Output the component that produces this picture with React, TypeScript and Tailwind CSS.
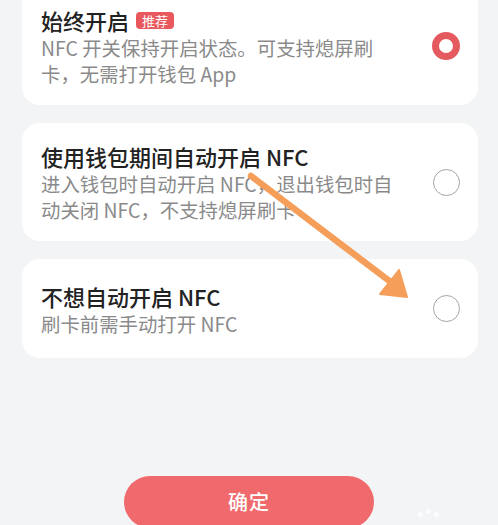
import React from "react"

type Option = {
    title: string
    desc: string
    badge?: string
    selected?: boolean
}

const options: Option[] = [
    {
        title: "始终开启",
        badge: "推荐",
        desc: "NFC 开关保持开启状态。可支持熄屏刷卡，无需打开钱包 App",
        selected: true,
    },
    {
        title: "使用钱包期间自动开启 NFC",
        desc: "进入钱包时自动开启 NFC，退出钱包时自动关闭 NFC，不支持熄屏刷卡",
    },
    {
        title: "不想自动开启 NFC",
        desc: "刷卡前需手动打开 NFC",
    },
]

export default function App() {
    return (
        <div className="relative w-[498px] h-[525px] overflow-hidden bg-[#f3f4f5] font-['Noto_Sans_CJK_SC','Noto_Sans',sans-serif]">
            <div className="-mt-[13px] pl-[22px] pr-[20px] flex flex-col gap-[18px]">
                {options.map((o) => (
                    <OptionCard key={o.title} {...o} />
                ))}
            </div>

            <div className="mt-[118px] flex justify-center">
                <button className="w-[250px] h-[52px] rounded-full bg-[#f06a6d] text-white text-[20px] font-medium tracking-[0.05em]">
                    确定
                </button>
            </div>

            {/* annotation arrow */}
            <svg className="absolute left-0 top-0 pointer-events-none" width="498" height="525" viewBox="0 0 498 525">
                <line x1="251" y1="176" x2="392" y2="283" stroke="#f59e5a" strokeWidth="6.5" strokeLinecap="round" />
                <polygon points="399,270 380,294 407,297" fill="#f59e5a" strokeLinejoin="round" stroke="#f59e5a" strokeWidth="2" />
            </svg>

            {/* faint watermark */}
            <div className="absolute left-[418px] top-[512px] flex gap-[3px] opacity-80">
                <span className="w-[5px] h-[5px] rounded-full bg-white" />
                <span className="w-[5px] h-[5px] rounded-full bg-white mt-[-3px]" />
                <span className="w-[5px] h-[5px] rounded-full bg-white" />
            </div>
        </div>
    )
}

function OptionCard({ title, desc, badge, selected }: Option) {
    return (
        <div className="flex items-center justify-between min-h-[99px] rounded-[18px] bg-white pl-[19px] pr-[18px] py-[18px]">
            <div className="w-[358px]">
                <div className="flex items-center gap-[7px]">
                    <span className="text-[22px] leading-[30px] font-medium text-[#222222]">{title}</span>
                    {badge && (
                        <span className="h-[17px] px-[6px] rounded-[4px] bg-[#e8585d] text-white text-[13px] leading-[17px]">
                            {badge}
                        </span>
                    )}
                </div>
                <p className="text-[19.4px] leading-[26px] text-[#8a8a8a]">{desc}</p>
            </div>
            {selected ? (
                <span className="w-[28px] h-[28px] rounded-full border-[7.5px] border-[#e45a5f]" />
            ) : (
                <span className="w-[27px] h-[27px] rounded-full border-[1.5px] border-[#a3a3a3]" />
            )}
        </div>
    )
}
